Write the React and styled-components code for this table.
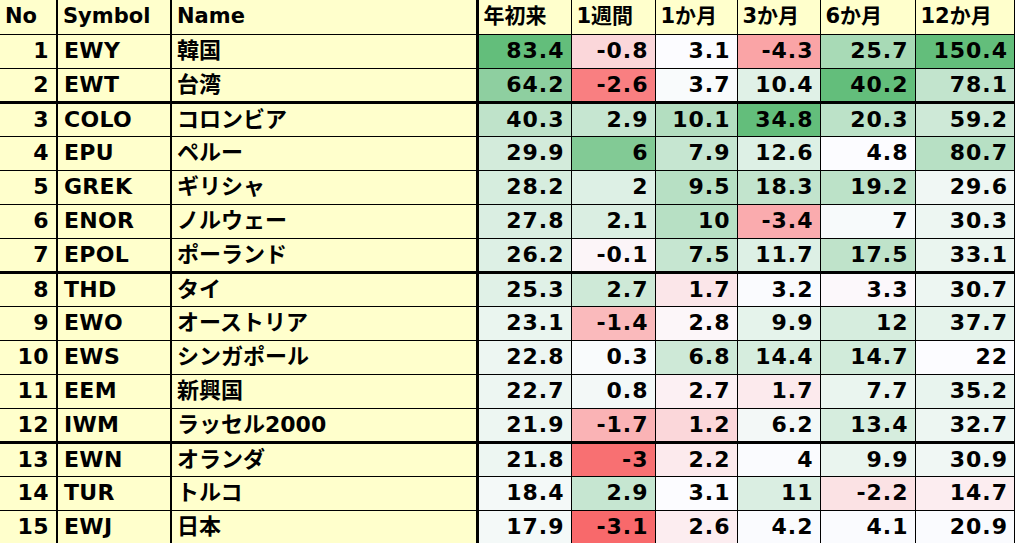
import React from "react";
import styled, { createGlobalStyle } from "styled-components";

const GlobalStyle = createGlobalStyle`
  body {
    margin: 0;
    background: #ffffff;
  }
`;

const Sheet = styled.table`
  width: 1015px;
  table-layout: fixed;
  border-collapse: collapse;
  font-family: "DejaVu Sans", "Noto Sans CJK JP", sans-serif;
  font-weight: bold;
  line-height: 1;
  color: #000;
`;

const Row = styled.tr`
  height: 34px;
  border-bottom: ${(p) => (p.$thick ? "3px" : "1px")} solid #000;

  & > * {
    vertical-align: middle;
    padding-top: 2px;
  }
`;

const Head = styled.th`
  background: #ffffcc;
  text-align: left;
  font-size: 21px;
  font-weight: bold;
  padding: 0 4px 0 5px;
  white-space: nowrap;
  border-right: ${(p) => p.$edge || "1px"} solid #000;
`;

const NoCell = styled.td`
  background: #ffffcc;
  text-align: right;
  font-size: 22px;
  letter-spacing: 0.5px;
  padding: 0 7px 0 0;
  border-right: 2px solid #000;
`;

const SymCell = styled.td`
  background: #ffffcc;
  font-size: 22px;
  letter-spacing: 0.3px;
  padding: 0 0 0 6px;
  border-right: 2px solid #000;
  white-space: nowrap;
`;

const NameCell = styled.td`
  background: #ffffcc;
  font-size: 22px;
  padding: 0 0 0 5px;
  border-right: 3px solid #000;
  white-space: nowrap;
`;

const NumCell = styled.td`
  background: ${(p) => p.$bg};
  text-align: right;
  font-size: 22px;
  letter-spacing: 1px;
  padding: 0 6px 0 0;
  border-right: ${(p) => (p.$last ? "2px" : "1px")} solid #000;
  white-space: nowrap;
`;

const WHITE = [252, 252, 255];
const GREEN = [99, 190, 123];
const RED = [248, 105, 107];

// positive = green strength, negative = red strength
const shade = (t) => {
  const c = t >= 0 ? GREEN : RED;
  const a = Math.min(1, Math.abs(t));
  return `rgb(${WHITE.map((v, i) => Math.round(v + (c[i] - v) * a)).join(",")})`;
};

const widths = [57, 114, 306, 94, 84, 82, 83, 95, 100];
const heads = ["No", "Symbol", "Name", "年初来", "1週間", "1か月", "3か月", "6か月", "12か月"];

const rows = [
  [1, "EWY", "韓国", ["83.4", "-0.8", "3.1", "-4.3", "25.7", "150.4"], [1, -0.25, 0, -0.6, 0.55, 1]],
  [2, "EWT", "台湾", ["64.2", "-2.6", "3.7", "10.4", "40.2", "78.1"], [0.72, -0.85, 0.02, 0.18, 1, 0.38]],
  [3, "COLO", "コロンビア", ["40.3", "2.9", "10.1", "34.8", "20.3", "59.2"], [0.4, 0.35, 0.48, 1, 0.42, 0.3]],
  [4, "EPU", "ペルー", ["29.9", "6", "7.9", "12.6", "4.8", "80.7"], [0.27, 0.8, 0.35, 0.2, 0, 0.45]],
  [5, "GREK", "ギリシャ", ["28.2", "2", "9.5", "18.3", "19.2", "29.6"], [0.25, 0.2, 0.45, 0.38, 0.42, 0.08]],
  [6, "ENOR", "ノルウェー", ["27.8", "2.1", "10", "-3.4", "7", "30.3"], [0.22, 0.22, 0.45, -0.55, 0.03, 0.1]],
  [7, "EPOL", "ポーランド", ["26.2", "-0.1", "7.5", "11.7", "17.5", "33.1"], [0.2, -0.05, 0.35, 0.2, 0.4, 0.12]],
  [8, "THD", "タイ", ["25.3", "2.7", "1.7", "3.2", "3.3", "30.7"], [0.18, 0.3, -0.15, 0.01, -0.03, 0.1]],
  [9, "EWO", "オーストリア", ["23.1", "-1.4", "2.8", "9.9", "12", "37.7"], [0.12, -0.45, -0.04, 0.15, 0.25, 0.15]],
  [10, "EWS", "シンガポール", ["22.8", "0.3", "6.8", "14.4", "14.7", "22"], [0.1, 0.02, 0.3, 0.25, 0.28, 0]],
  [11, "EEM", "新興国", ["22.7", "0.8", "2.7", "1.7", "7.7", "35.2"], [0.1, 0.06, -0.08, -0.12, 0.12, 0.13]],
  [12, "IWM", "ラッセル2000", ["21.9", "-1.7", "1.2", "6.2", "13.4", "32.7"], [0.1, -0.5, -0.25, 0.06, 0.25, 0.1]],
  [13, "EWN", "オランダ", ["21.8", "-3", "2.2", "4", "9.9", "30.9"], [0.1, -0.95, -0.12, 0.01, 0.12, 0.08]],
  [14, "TUR", "トルコ", ["18.4", "2.9", "3.1", "11", "-2.2", "14.7"], [0.05, 0.35, 0, 0.22, -0.18, -0.1]],
  [15, "EWJ", "日本", ["17.9", "-3.1", "2.6", "4.2", "4.1", "20.9"], [0.05, -1, -0.1, 0.01, 0.01, 0.01]],
];

const thickAfter = [2, 7, 12, 15];

export default function App() {
  return (
    <>
      <GlobalStyle />
      <Sheet>
        <colgroup>
          {widths.map((w, i) => (
            <col key={i} style={{ width: w }} />
          ))}
        </colgroup>
        <thead>
          <Row>
            {heads.map((h, i) => (
              <Head
                key={h}
                $edge={i === 0 || i === 1 ? "2px" : i === 2 ? "3px" : i === 8 ? "2px" : "1px"}
              >
                {h}
              </Head>
            ))}
          </Row>
        </thead>
        <tbody>
          {rows.map(([no, sym, name, vals, tints]) => (
            <Row key={no} $thick={thickAfter.includes(no)}>
              <NoCell>{no}</NoCell>
              <SymCell>{sym}</SymCell>
              <NameCell>{name}</NameCell>
              {vals.map((v, i) => (
                <NumCell key={i} $bg={shade(tints[i])} $last={i === 5}>
                  {v}
                </NumCell>
              ))}
            </Row>
          ))}
        </tbody>
      </Sheet>
    </>
  );
}
